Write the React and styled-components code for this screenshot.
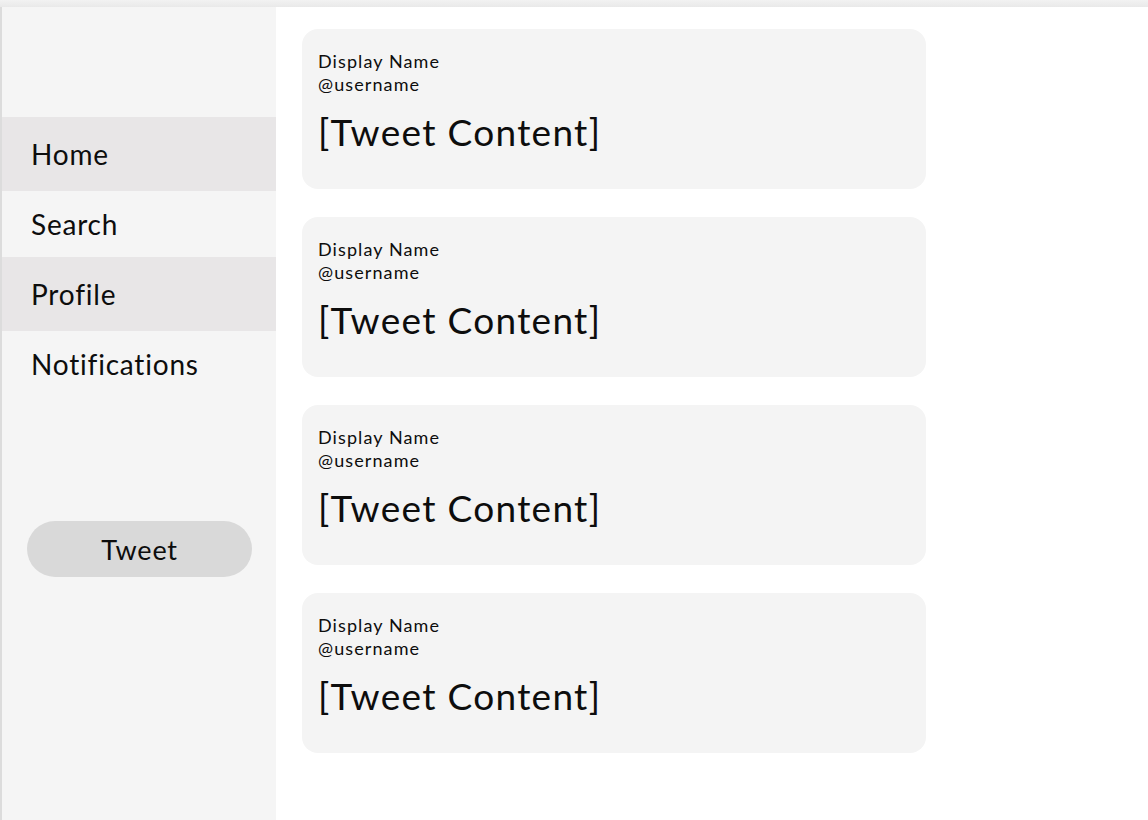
import React from 'react';
import styled, {createGlobalStyle} from 'styled-components';

const GlobalStyle = createGlobalStyle`
  html, body {
    margin: 0;
    padding: 0;
    background: #fff;
    font-family: Lato, "Open Sans", sans-serif;
    color: #0d0d0d;
  }
`;

const Page = styled.div`
  display: flex;
  flex-direction: column;
  height: 820px;
  overflow: hidden;
`;

const TopEdge = styled.div`
  height: 7px;
  flex-shrink: 0;
  background: linear-gradient(#f2f2f2, #e9e9e9);
`;

const Body = styled.div`
  display: flex;
  flex: 1;
  border-left: 2px solid #dcdcdc;
`;

const Sidebar = styled.nav`
  width: 274px;
  flex-shrink: 0;
  background: #f5f5f5;
  padding-top: 110px;
  display: flex;
  flex-direction: column;
`;

const NavItem = styled.div`
  height: ${p => (p.active ? 74 : 66)}px;
  display: flex;
  align-items: center;
  padding-left: 29px;
  font-size: 28px;
  letter-spacing: 0.8px;
  background: ${p => (p.active ? '#e8e6e7' : 'transparent')};
`;

const TweetButton = styled.button`
  margin: 124px 0 0 25px;
  width: 225px;
  height: 56px;
  border: none;
  border-radius: 28px;
  background: #d9d9d9;
  font-family: inherit;
  font-size: 27px;
  letter-spacing: 0.8px;
  color: #0d0d0d;
`;

const Feed = styled.main`
  padding: 22px 0 0 26px;
  display: flex;
  flex-direction: column;
  gap: 28px;
`;

const Card = styled.article`
  width: 624px;
  height: 160px;
  box-sizing: border-box;
  background: #f4f4f4;
  border-radius: 16px;
  padding: 21px 16px;
`;

const Name = styled.div`
  font-size: 18px;
  line-height: 23px;
  letter-spacing: 1.1px;
`;

const Content = styled.div`
  margin-top: 14px;
  font-size: 37px;
  line-height: 44px;
  letter-spacing: 1.3px;
`;

const navItems = [
    {label: 'Home', active: true},
    {label: 'Search'},
    {label: 'Profile', active: true},
    {label: 'Notifications'},
];

const App = () => {
    return (
        <Page>
            <GlobalStyle/>
            <TopEdge/>
            <Body>
                <Sidebar>
                    {navItems.map(item => (
                        <NavItem key={item.label} active={item.active}>{item.label}</NavItem>
                    ))}
                    <TweetButton>Tweet</TweetButton>
                </Sidebar>
                <Feed>
                    {[1, 2, 3, 4].map(i => (
                        <Card key={i}>
                            <Name>Display Name</Name>
                            <Name>@username</Name>
                            <Content>[Tweet Content]</Content>
                        </Card>
                    ))}
                </Feed>
            </Body>
        </Page>
    );
};

export default App;
